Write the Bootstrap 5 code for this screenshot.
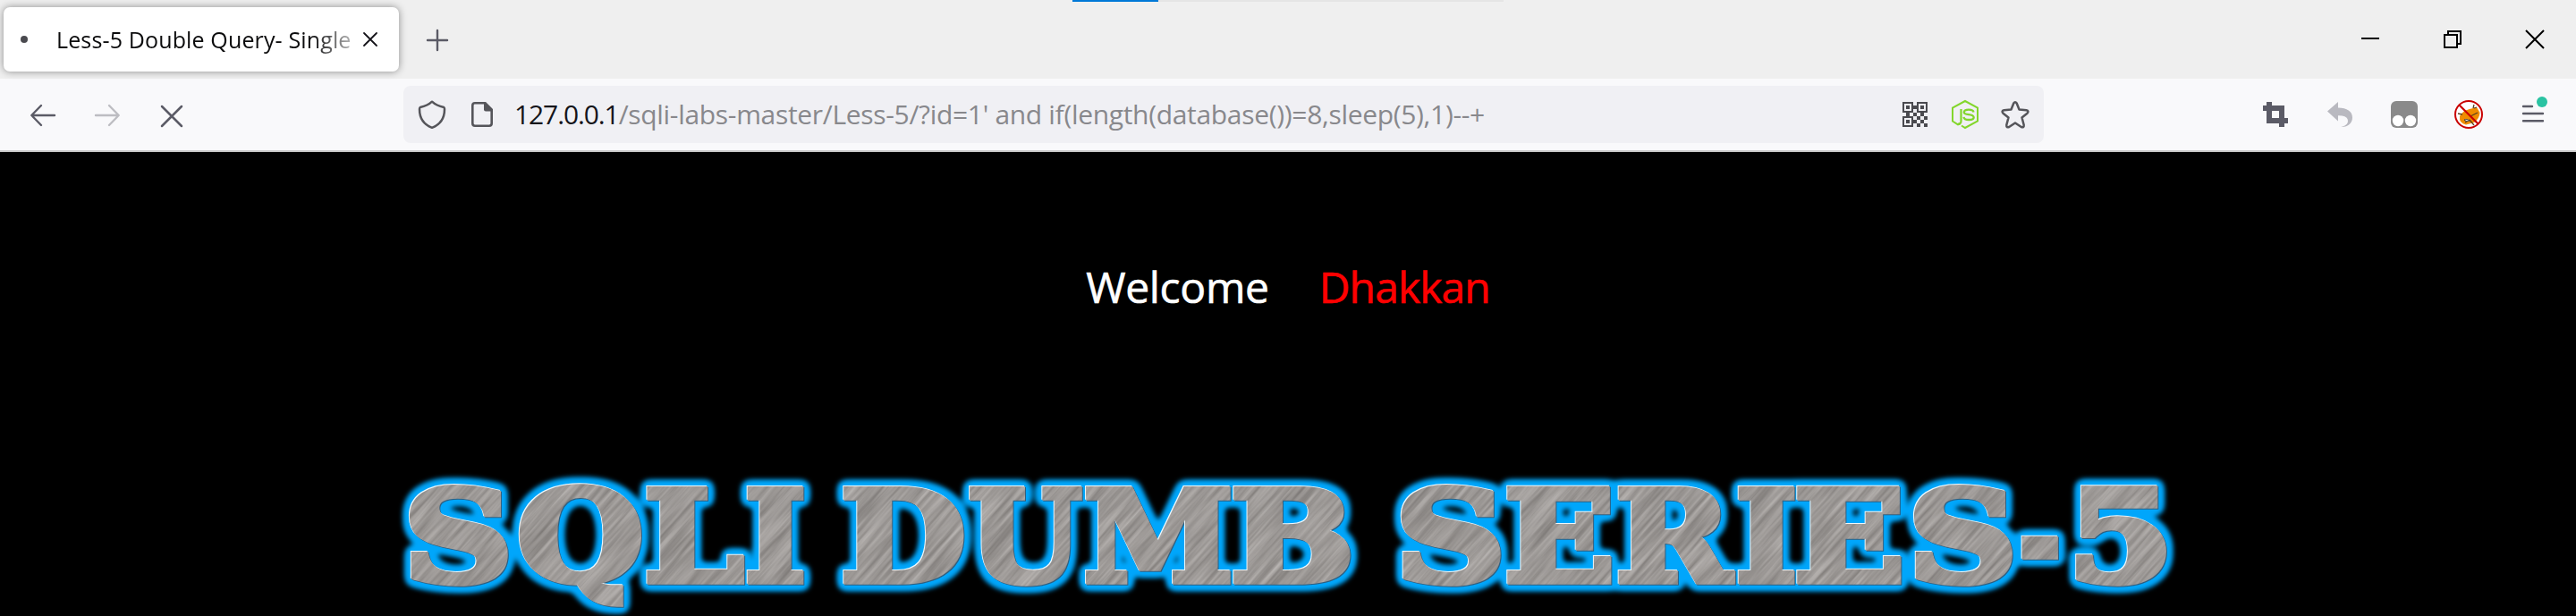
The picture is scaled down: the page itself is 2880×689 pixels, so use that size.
<!DOCTYPE html>
<html lang="en">
<head>
<meta charset="utf-8">
<title>Less-5 Double Query- Single Quotes- String</title>
<link href="https://cdn.jsdelivr.net/npm/bootstrap@5.3.0/dist/css/bootstrap.min.css" rel="stylesheet">
<style>
body{font-family:"Open Sans","Noto Sans",sans-serif;background:#000;height:689px;overflow:hidden}
svg{display:block;overflow:visible;flex:none}
.tabstrip{height:88px;background:#efefef}
.loader{left:1199px;top:0;width:482px;height:2px;background:#e5e5e5}
.loader span{display:block;width:96px;height:2px;background:#0078d7}
.browser-tab{width:442px;height:72px;margin:8px 0 0 4px;border-radius:7px;background:#fff;box-shadow:0 0 8px rgba(0,0,0,.42)}
.tab-title{margin-left:32px;width:335px;font-size:25px;color:#0c0c0d;white-space:nowrap;letter-spacing:.14px;line-height:36px;-webkit-mask-image:linear-gradient(90deg,#000 285px,transparent 350px)}
.winbtn{width:92px;height:88px}
.tools{height:82px;background:#f9f9fb;border-bottom:2px solid #ccc;padding:0 12px}
.tool{width:72px;height:80px}
.urlbar{width:1834px;height:64px;margin-left:223px;border-radius:8px;background:#f0f0f4;padding:0 4px}
.urlicon{width:56px;height:64px}
.url{margin-left:8px;font-size:30px;line-height:40px;color:#88888c;white-space:nowrap;letter-spacing:-.32px}
.url b{font-weight:400;color:#15141a;letter-spacing:-1.1px}
.welcome{height:340px;padding-top:113px;font-size:48px;line-height:76px;color:#fff;gap:56px;-webkit-text-stroke:.6px}
.welcome span{letter-spacing:-.3px}
.welcome .name{color:red;letter-spacing:-.9px}
.banner{font-family:"DejaVu Serif",serif;font-weight:700;font-size:141px}
</style>
</head>
<body>
<header>
  <div class="tabstrip d-flex position-relative">
    <div class="loader position-absolute"><span></span></div>
    <div class="browser-tab d-flex align-items-center">
      <svg width="8" height="8" style="margin-left:19px"><circle cx="4" cy="4" r="4" fill="#4a4a4f"/></svg>
      <div class="tab-title">Less-5 Double Query- Single</div>
      <svg width="16" height="16" style="margin-left:8px" stroke="#15141a" stroke-width="1.8" stroke-linecap="round"><path d="M1 1 15 15M15 1 1 15"/></svg>
    </div>
    <svg width="24" height="24" style="margin:33px 0 0 31px" stroke="#5b5b66" stroke-width="2.4" stroke-linecap="round"><path d="M12 1V23M1 12H23"/></svg>
    <div class="d-flex ms-auto">
      <div class="winbtn d-flex justify-content-center"><svg width="20" height="88"><path d="M0 43H20" stroke="#000" stroke-width="2"/></svg></div>
      <div class="winbtn d-flex justify-content-center align-items-center"><svg width="20" height="20" fill="none" stroke="#000" stroke-width="2"><path d="M1 5H15V19H1ZM5 5V1H19V15H15"/></svg></div>
      <div class="winbtn d-flex justify-content-center align-items-center"><svg width="20" height="20" stroke="#000" stroke-width="2"><path d="M0 0 20 20M20 0 0 20"/></svg></div>
    </div>
  </div>
  <nav class="tools d-flex align-items-center">
    <div class="tool d-flex align-items-center justify-content-center"><svg width="28" height="24" fill="none" stroke="#5b5b66" stroke-width="2.4" stroke-linecap="round" stroke-linejoin="round"><path d="M27 13H1.5M12 2 1.3 13 12 24"/></svg></div>
    <div class="tool d-flex align-items-center justify-content-center"><svg width="28" height="24" fill="none" stroke="#bdbdc2" stroke-width="2.4" stroke-linecap="round" stroke-linejoin="round"><path d="M1 13H26.5M16 2 26.7 13 16 24"/></svg></div>
    <div class="tool d-flex align-items-center justify-content-center"><svg width="24" height="24" stroke="#5b5b66" stroke-width="2.5" stroke-linecap="round"><path d="M1 3 23 25M23 3 1 25"/></svg></div>
    <div class="urlbar d-flex align-items-center">
      <div class="urlicon d-flex align-items-center justify-content-center"><svg width="32" height="32" fill="none" stroke="#55555a" stroke-width="2.5" stroke-linejoin="round"><path d="M16 1.7C12.500 5 7.500 7 2.800 8Q2 8.500 2 10C2 20 6 27 16 30.800C26 27 30 20 30 10Q30 8.500 29.200 8C24.500 7 19.500 5 16 1.700Z"/></svg></div>
      <div class="urlicon d-flex align-items-center justify-content-center"><svg width="24" height="28"><path d="M4 1.300H15.500L22.700 8.500V24Q22.700 26.700 20 26.700H4Q1.300 26.700 1.300 24V4Q1.300 1.300 4 1.300Z" fill="none" stroke="#55555a" stroke-width="2.600"/><path d="M14 1H16L23.500 8.500V10.500H16Q14 10.500 14 8.500Z" fill="#55555a"/></svg></div>
      <div class="url"><b>127.0.0.1</b>/sqli-labs-master/Less-5/?id=1' and if(length(database())=8,sleep(5),1)--+</div>
      <div class="d-flex ms-auto">
        <div class="urlicon d-flex align-items-center justify-content-center"><svg width="28" height="28" fill="#4a4a4f"><path fill-rule="evenodd" d="M0 0H12V12H0ZM2 2V10H10V2ZM4 4H8V8H4ZM16 0H28V12H16ZM18 2V10H26V2ZM20 4H24V8H20ZM0 16H12V28H0ZM2 18V26H10V18ZM4 20H8V24H4Z"/><path d="M12 4h4v4h-4zM4 12h4v4H4zM12 12h4v4h-4zM20 12h4v4h-4zM16 16h4v4h-4zM24 16h4v4h-4zM12 20h4v4h-4zM20 20h4v4h-4zM16 24h4v4h-4zM24 24h4v4h-4z"/></svg></div>
        <div class="urlicon d-flex align-items-center justify-content-center"><svg width="30" height="32" fill="none" stroke="#83d62c" stroke-width="2"><path d="M9.500 26.500 7 27.300 1 23.500V8.500L15 1 29 8.500V23.500L15 31 11 28.500"/><path d="M10.500 10V23.500Q10.500 26.800 7 26.500" stroke-width="2.200"/><path d="M24.500 13.500Q24 10.700 19 10.700T13.800 13.500Q13.800 15.700 19 16.100T24.700 19.200Q24.700 22 19.300 22T13.500 18.800" stroke-width="2.300"/></svg></div>
        <div class="urlicon d-flex align-items-center justify-content-center"><svg width="32" height="32" fill="none" stroke="#55555a" stroke-width="2.500" stroke-linejoin="round"><path d="M14.300 3.500Q16 .8 17.700 3.500L20.500 10.500 28.500 11.200Q31.800 12 29.500 14.700L23.500 19.500 25.700 27.700Q26 31.200 22.800 30L16 25.500 9.200 30Q6 31.200 6.300 27.700L8.500 19.500 2.500 14.700Q.2 12 3.500 11.200L11.500 10.500Z"/></svg></div>
      </div>
    </div>
    <div class="d-flex ms-auto">
      <div class="tool d-flex align-items-center justify-content-center"><svg width="28" height="28" fill="none" stroke="#5b5b66" stroke-width="6"><path d="M7 0V21H28M0 7H21V28"/></svg></div>
      <div class="tool d-flex align-items-center justify-content-center"><svg width="28" height="28" fill="#b9b9c0"><path d="M0 10.500 12 0V6.500C22 6.500 28 10.500 28 17.500C28 24 22.500 28.500 15.500 28C22 26.500 24 23 22.500 19Q21 15 12 15.200V21.500Z"/></svg></div>
      <div class="tool d-flex align-items-center justify-content-center"><svg width="30" height="30"><rect width="30" height="30" rx="6" fill="#8a8a8a"/><circle cx="8" cy="22" r="6.200" fill="#fff"/><circle cx="22" cy="22" r="6.200" fill="#fff"/></svg></div>
      <div class="tool d-flex align-items-center justify-content-center"><svg width="32" height="32"><circle cx="16" cy="16" r="15" fill="#fff"/><path d="M6 18Q9 12 17 10L25 8 28.500 14Q28 21 22 25L13 27.500Q5 26 6 18Z" fill="#f08c00"/><path d="M4 15 9 16M22 5 21 9M22 9 25 8M18 18 26 14M11 22 15 23M17 22 22 28M12 25 17 22" stroke="#5a4020" stroke-width="1.300" fill="none"/><path d="M11 22.300Q14 20 17 23Q13 24.500 11 22.300Z" fill="#eee" stroke="#333" stroke-width=".8"/><circle cx="16" cy="16" r="15" fill="none" stroke="#c90000" stroke-width="2"/><path d="M5.500 5.500 26.500 26.500" stroke="#c90000" stroke-width="2.300"/></svg></div>
      <div class="tool d-flex align-items-center justify-content-center"><svg width="24" height="32" stroke="#5b5b66" stroke-width="2.400" stroke-linecap="round"><path d="M1 7H11M1 15H23M1 23.200H23"/><circle cx="22" cy="2" r="6" fill="#2ac3a2" stroke="none"/></svg></div>
    </div>
  </nav>
</header>
<main>
  <div class="welcome d-flex justify-content-center"><span>Welcome</span><span class="name">Dhakkan</span></div>
  <svg class="mx-auto" width="2020" height="179" viewBox="430 510 2020 179">
    <defs>
      <filter id="grain" x="0" y="0" width="100%" height="100%" color-interpolation-filters="sRGB">
        <feTurbulence type="fractalNoise" baseFrequency=".012 .22" numOctaves="3" seed="4" stitchTiles="stitch"/>
        <feColorMatrix values=".3 0 0 0 .46  .3 0 0 0 .445  .3 0 0 0 .435  0 0 0 0 1"/>
      </filter>
      <pattern id="steel" width="600" height="600" patternUnits="userSpaceOnUse" patternTransform="rotate(-48)"><rect width="600" height="600" fill="#999" filter="url(#grain)"/></pattern>
      <filter id="metal" filterUnits="userSpaceOnUse" x="430" y="510" width="2020" height="179" color-interpolation-filters="sRGB">
        <feMorphology in="SourceAlpha" operator="dilate" radius="3" result="m"/>
        <feGaussianBlur in="m" stdDeviation="5" result="b"/>
        <feComponentTransfer in="b" result="g"><feFuncA type="linear" slope="5" intercept="-.25"/></feComponentTransfer>
        <feGaussianBlur in="g" stdDeviation="2" result="g2"/>
        <feFlood flood-color="#00a6fb"/><feComposite in2="g2" operator="in" result="glow"/>
        <feOffset in="SourceAlpha" dx="-1.500" dy="-1.500" result="o"/>
        <feFlood flood-color="#eef8fc"/><feComposite in2="o" operator="in" result="light"/>
        <feOffset in="SourceAlpha" dx="1" dy="1" result="p"/>
        <feFlood flood-color="#2f5f80"/><feComposite in2="p" operator="in" result="dark"/>
        <feMerge><feMergeNode in="glow"/><feMergeNode in="dark"/><feMergeNode in="light"/><feMergeNode in="SourceGraphic"/></feMerge>
      </filter>
    </defs>
    <text id="banner" class="banner" y="650" fill="url(#steel)" stroke="url(#steel)" stroke-width="7.500" filter="url(#metal)">SQLI DUMB SERIES-5</text>
  </svg>
</main>
<script src="https://cdn.jsdelivr.net/npm/bootstrap@5.3.0/dist/js/bootstrap.bundle.min.js"></script>
<script>
// Left and right ink edges of each banner letter; null is a word space.
const edges=[[458,568],[580,717],[723,833],[835,899],null,[943,1078],[1083,1210],[1213,1376],[1379,1510],null,[1567,1678],[1685,1802],[1809,1940],[1943,2007],[2009,2126],[2140,2250],[2259,2302],[2321,2422]];
const banner=document.getElementById('banner');
const letters=[...banner.textContent];
const ctx=document.createElement('canvas').getContext('2d');
ctx.font='bold 141px "DejaVu Serif"';
banner.textContent='';
letters.forEach((ch,i)=>{
  const t=document.createElementNS('http://www.w3.org/2000/svg','tspan');
  t.textContent=ch;
  if(edges[i]){
    const m=ctx.measureText(ch),l=edges[i][0]+4,r=edges[i][1]-4;
    const s=(r-l)/(m.actualBoundingBoxRight+m.actualBoundingBoxLeft);
    t.setAttribute('x',l+m.actualBoundingBoxLeft*s);
    t.setAttribute('textLength',m.width*s);
    t.setAttribute('lengthAdjust','spacingAndGlyphs');
  }
  banner.appendChild(t);
});
</script>
</body>
</html>
